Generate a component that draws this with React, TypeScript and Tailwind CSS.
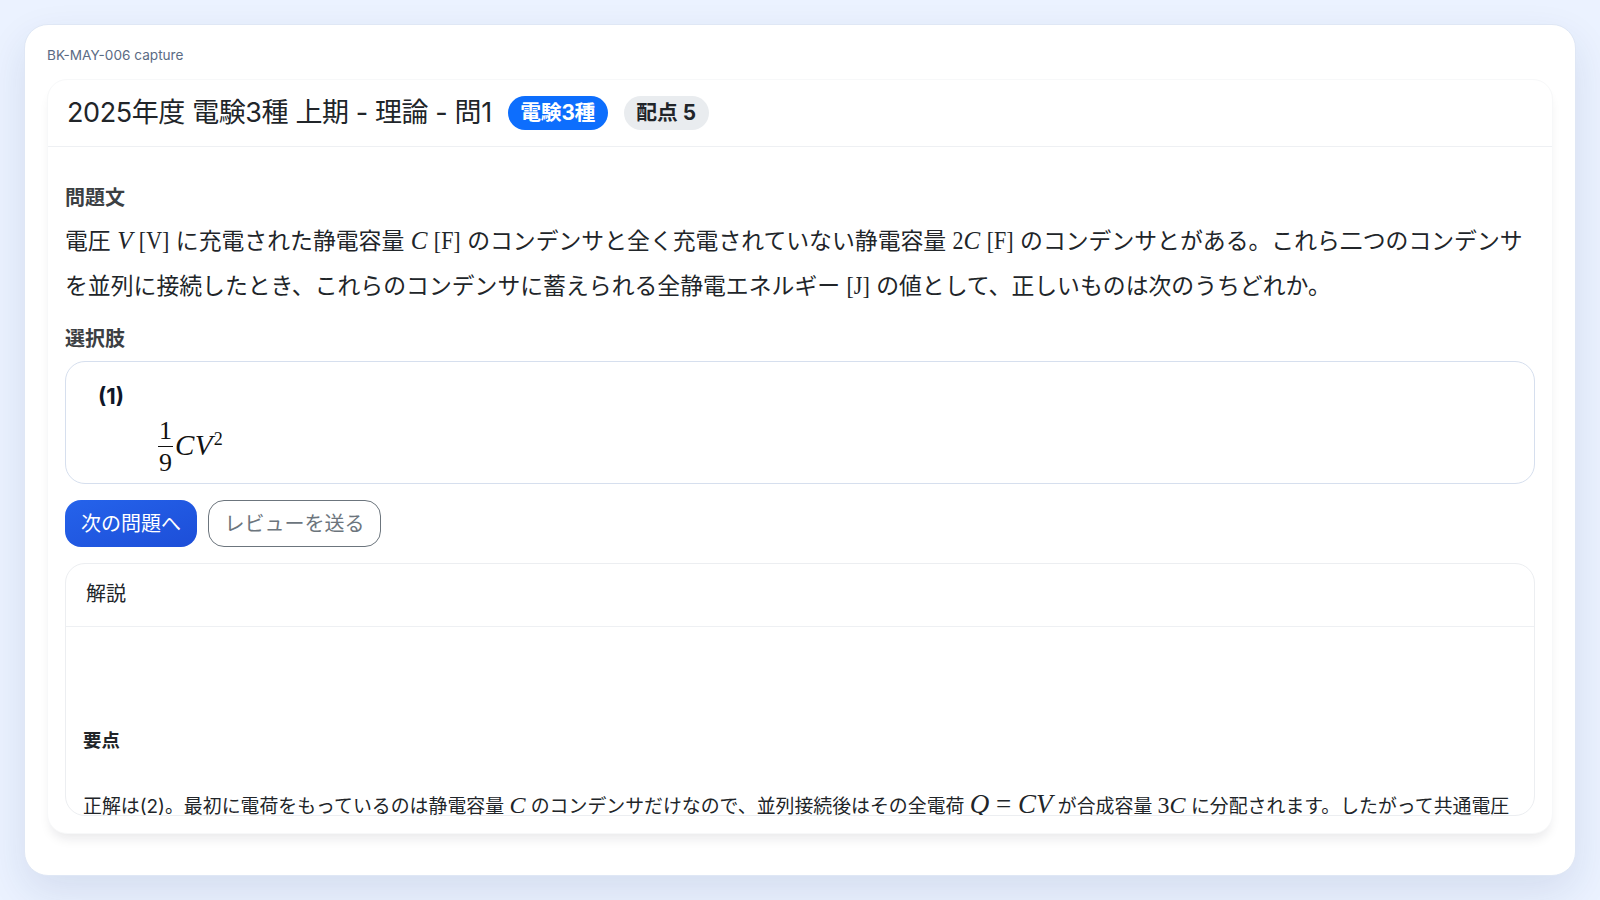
const sans = "font-['Inter','Noto_Sans_CJK_JP',sans-serif]";

function V({ children }: { children: React.ReactNode }) {
  return <span className="font-['Liberation_Serif',serif] text-[25px] italic leading-none">{children}</span>;
}
function R({ children }: { children: React.ReactNode }) {
  return <span className="inline-block origin-[50%_75%] scale-y-[1.15] font-['Liberation_Serif',serif] text-[22px] leading-none">{children}</span>;
}

export default function App() {
  return (
    <div className={`h-screen overflow-hidden bg-[#ebf2ff] p-6 ${sans}`}>
      <div className="flex h-full flex-col rounded-[24px] border border-[#dfe7f5] bg-white px-[22px] pb-[41px] pt-[20px] shadow-[0_16px_40px_rgba(30,58,110,0.11)]">
        <div className="mb-[13px] text-[13.6px] leading-[21px] text-[#5b6b84]">BK-MAY-006 capture</div>
        <div className="flex min-h-0 flex-1 flex-col rounded-[20px] border border-[#f7f8f9] bg-white shadow-[0_8px_12px_-4px_rgba(15,23,42,0.10)]">
          <div className="flex h-[67px] shrink-0 items-center rounded-t-[20px] border-b border-[#eef0f3] px-[19px]">
            <span className="text-[27px] leading-[34px] tracking-[-0.015em] text-[#212529]">2025年度 電験3種 上期 - 理論 - 問1</span>
            <span className="ml-4 flex h-[34px] w-[100px] items-center justify-center rounded-full bg-[#0d6efd] text-[20.8px] font-bold tracking-[-0.01em] text-white">電験3種</span>
            <span className="ml-4 flex h-[34px] w-[85px] items-center justify-center rounded-full bg-[#e9ecef] text-[20.8px] font-bold text-[#212529]">配点 5</span>
          </div>
          <div className="flex min-h-0 flex-1 flex-col px-[17px] pb-[17px] pt-[36px]">
            <div className="text-[20px] font-bold leading-[30px] text-[#3c4043]">問題文</div>
            <p className="mt-[6px] text-[22.85px] leading-[44.8px] text-[#212529]">
              電圧 <V>V</V> <R>[V]</R> に充電された静電容量 <V>C</V> <R>[F]</R> のコンデンサと全く充電されていない静電容量 <R>2</R><V>C</V> <R>[F]</R> のコンデンサとがある。これら二つのコンデンサを並列に接続したとき、これらのコンデンサに蓄えられる全静電エネルギー <R>[J]</R> の値として、正しいものは次のうちどれか。
            </p>
            <div className="mt-[15px] text-[20px] font-bold leading-[30px] text-[#3c4043]">選択肢</div>
            <div className="mt-[7px] h-[123px] shrink-0 rounded-[20px] border border-[#d6dfee] px-[32px] pt-[19px]">
              <div className="text-[22px] font-bold leading-[30px] text-[#0f172a]">(1)</div>
              <div className="ml-[60px] mt-[4px] flex items-center font-['Liberation_Serif',serif] text-[#111]">
                <span className="flex flex-col items-center text-[26px] leading-[31px]">
                  <span className="border-b border-[#111] px-[1px]">1</span>
                  <span>9</span>
                </span>
                <span className="ml-[2px] text-[29px] italic tracking-[0.01em]">CV</span>
                <span className="mb-[14px] ml-[1px] text-[18px]">2</span>
              </div>
            </div>
            <div className="mt-4 flex shrink-0 gap-[11px]">
              <button className="h-[47px] w-[132px] rounded-[16px] bg-gradient-to-br from-[#2563eb] to-[#1d4ed8] pt-[1px] text-[20px] text-white">次の問題へ</button>
              <button className="h-[47px] w-[173px] rounded-[16px] border border-[#6c757d] bg-white pt-[1px] text-[20px] text-[#6c757d]">レビューを送る</button>
            </div>
            <div className="mt-4 flex min-h-0 flex-1 flex-col overflow-hidden rounded-[20px] border border-[#eceef1]">
              <div className="flex h-[63px] shrink-0 items-center border-b border-[#eef0f3] px-5 pb-[1px] text-[20px] text-[#212529]">解説</div>
              <div className="px-[17px] text-[18.9px] text-[#212529]">
                <div className="mt-[100px] text-[18.4px] font-bold leading-[27px]">要点</div>
                <p className="mt-[37px] whitespace-nowrap leading-[27px]">
                  正解は(2)。最初に電荷をもっているのは静電容量 <span className="font-['Liberation_Serif',serif] text-[24px] italic leading-none">C</span> のコンデンサだけなので、並列接続後はその全電荷 <span className="font-['Liberation_Serif',serif] text-[27px] leading-none"><i>Q</i> = <i>CV</i></span> が合成容量 <span className="font-['Liberation_Serif',serif] text-[24px] leading-none">3<i>C</i></span> に分配されます。したがって共通電圧
                </p>
              </div>
            </div>
          </div>
        </div>
      </div>
    </div>
  );
}
